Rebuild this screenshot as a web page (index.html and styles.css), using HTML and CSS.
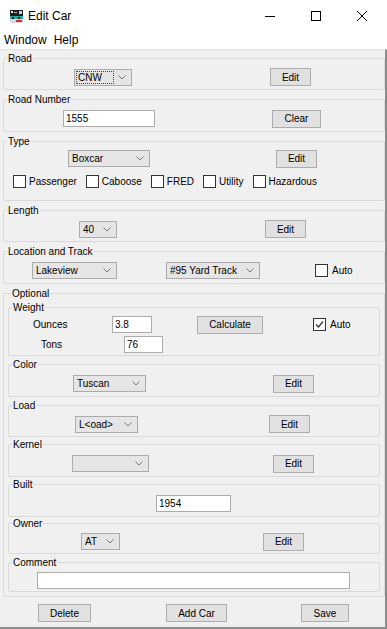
FILE: index.html
```html
<!DOCTYPE html>
<html lang="en">
<head>
    <meta charset="UTF-8">
    <title>Edit Car</title>
    <link rel="stylesheet" href="styles.css">
</head>
<body>
    <div class="window">
        <div class="titlebar">
            <svg class="app-icon" width="13" height="13" viewBox="0 0 13 13">
                <rect x="0" y="0" width="13" height="7" fill="#1e1e1e"/>
                <rect x="1" y="1" width="2" height="2" fill="#e8e8e8"/>
                <rect x="4" y="2" width="3" height="1" fill="#bbbbbb"/>
                <rect x="9" y="1" width="3" height="3" fill="#d0d0d0"/>
                <rect x="0" y="6" width="13" height="3" fill="#2aa7a0"/>
                <rect x="2" y="7" width="2" height="2" fill="#1e1e1e"/>
                <rect x="8" y="7" width="2" height="2" fill="#1e1e1e"/>
                <rect x="0" y="9" width="13" height="4" fill="#d8d8d8"/>
                <rect x="6" y="10" width="6" height="2" fill="#d42a2a"/>
            </svg>
            <span class="title">Edit Car</span>
            <div class="controls">
                <span class="ctl"><svg width="10" height="10" viewBox="0 0 10 10"><path d="M0 5.5H10" stroke="#000" stroke-width="1"/></svg></span>
                <span class="ctl"><svg width="10" height="10" viewBox="0 0 10 10"><rect x="0.5" y="0.5" width="9" height="9" fill="none" stroke="#000" stroke-width="1"/></svg></span>
                <span class="ctl"><svg width="10" height="10" viewBox="0 0 10 10"><path d="M0 0L10 10M10 0L0 10" stroke="#000" stroke-width="1"/></svg></span>
            </div>
        </div>
        <div class="menubar">
            <span>Window</span>
            <span>Help</span>
        </div>
        <div class="content">
            <fieldset class="group">
                <legend>Road</legend>
                <div class="row road-row">
                    <div class="combo combo-road is-focused"><span class="combo-text">CNW</span><span class="arrow"><svg width="8" height="5" viewBox="0 0 8 5"><path d="M0.5 0.5L4 4L7.5 0.5" fill="none" stroke="#777"/></svg></span></div>
                    <button class="btn btn-edit">Edit</button>
                </div>
            </fieldset>

            <fieldset class="group">
                <legend>Road Number</legend>
                <div class="row tall number-row">
                    <div class="field field-number">1555</div>
                    <button class="btn btn-clear">Clear</button>
                </div>
            </fieldset>

            <fieldset class="group type-group">
                <legend>Type</legend>
                <div class="row short type-row">
                    <div class="combo combo-type"><span class="combo-text">Boxcar</span><span class="arrow"><svg width="8" height="5" viewBox="0 0 8 5"><path d="M0.5 0.5L4 4L7.5 0.5" fill="none" stroke="#777"/></svg></span></div>
                    <button class="btn btn-edit">Edit</button>
                </div>
                <div class="row tall checks-row">
                    <label class="check"><span class="box"></span>Passenger</label>
                    <label class="check"><span class="box"></span>Caboose</label>
                    <label class="check"><span class="box"></span>FRED</label>
                    <label class="check"><span class="box"></span>Utility</label>
                    <label class="check"><span class="box"></span>Hazardous</label>
                </div>
            </fieldset>

            <fieldset class="group">
                <legend>Length</legend>
                <div class="row length-row">
                    <div class="combo combo-length"><span class="combo-text">40</span><span class="arrow"><svg width="8" height="5" viewBox="0 0 8 5"><path d="M0.5 0.5L4 4L7.5 0.5" fill="none" stroke="#777"/></svg></span></div>
                    <button class="btn btn-edit">Edit</button>
                </div>
            </fieldset>

            <fieldset class="group">
                <legend>Location and Track</legend>
                <div class="row tall location-row">
                    <div class="combo combo-location"><span class="combo-text">Lakeview</span><span class="arrow"><svg width="8" height="5" viewBox="0 0 8 5"><path d="M0.5 0.5L4 4L7.5 0.5" fill="none" stroke="#777"/></svg></span></div>
                    <div class="combo combo-track"><span class="combo-text">#95 Yard Track</span><span class="arrow"><svg width="8" height="5" viewBox="0 0 8 5"><path d="M0.5 0.5L4 4L7.5 0.5" fill="none" stroke="#777"/></svg></span></div>
                    <label class="check auto-check"><span class="box"></span>Auto</label>
                </div>
            </fieldset>

            <fieldset class="group optional">
                <legend>Optional</legend>

                <fieldset class="group inner weight">
                    <legend>Weight</legend>
                    <div class="row ounces-row">
                        <span class="wlabel ounces-label">Ounces</span>
                        <div class="field field-ounces">3.8</div>
                        <button class="btn btn-calc">Calculate</button>
                        <label class="check weight-auto"><span class="box checked"><svg width="11" height="11" viewBox="0 0 11 11"><path d="M2 5.5L4.5 8L9 2.5" fill="none" stroke="#333" stroke-width="1.2"/></svg></span>Auto</label>
                    </div>
                    <div class="row tons-row">
                        <span class="wlabel tons-label">Tons</span>
                        <div class="field field-tons">76</div>
                    </div>
                </fieldset>

                <fieldset class="group inner color-group">
                    <legend>Color</legend>
                    <div class="row tall color-row">
                        <div class="combo combo-color"><span class="combo-text">Tuscan</span><span class="arrow"><svg width="8" height="5" viewBox="0 0 8 5"><path d="M0.5 0.5L4 4L7.5 0.5" fill="none" stroke="#777"/></svg></span></div>
                        <button class="btn btn-edit2">Edit</button>
                    </div>
                </fieldset>

                <fieldset class="group inner load-group">
                    <legend>Load</legend>
                    <div class="row load-row">
                        <div class="combo combo-load"><span class="combo-text">L&lt;oad&gt;</span><span class="arrow"><svg width="8" height="5" viewBox="0 0 8 5"><path d="M0.5 0.5L4 4L7.5 0.5" fill="none" stroke="#777"/></svg></span></div>
                        <button class="btn btn-edit">Edit</button>
                    </div>
                </fieldset>

                <fieldset class="group inner kernel-group">
                    <legend>Kernel</legend>
                    <div class="row tall kernel-row">
                        <div class="combo combo-kernel"><span class="combo-text"></span><span class="arrow"><svg width="8" height="5" viewBox="0 0 8 5"><path d="M0.5 0.5L4 4L7.5 0.5" fill="none" stroke="#777"/></svg></span></div>
                        <button class="btn btn-edit">Edit</button>
                    </div>
                </fieldset>

                <fieldset class="group inner built-group">
                    <legend>Built</legend>
                    <div class="row tall built-row">
                        <div class="field field-built">1954</div>
                    </div>
                </fieldset>

                <fieldset class="group inner owner-group">
                    <legend>Owner</legend>
                    <div class="row owner-row">
                        <div class="combo combo-owner"><span class="combo-text">AT</span><span class="arrow"><svg width="8" height="5" viewBox="0 0 8 5"><path d="M0.5 0.5L4 4L7.5 0.5" fill="none" stroke="#777"/></svg></span></div>
                        <button class="btn btn-edit2">Edit</button>
                    </div>
                </fieldset>

                <fieldset class="group inner comment-group">
                    <legend>Comment</legend>
                    <div class="row comment-row">
                        <div class="field field-comment"></div>
                    </div>
                </fieldset>
            </fieldset>

            <div class="actions">
                <button class="btn btn-delete">Delete</button>
                <button class="btn btn-add">Add Car</button>
                <button class="btn btn-save">Save</button>
            </div>
        </div>
    </div>
</body>
</html>
```

FILE: styles.css
```css
* {
    box-sizing: border-box;
}
body {
    margin: 0;
    font-family: 'Liberation Sans', Arial, sans-serif;
    font-size: 10px;
    color: #000;
    background-color: #fff;
}
.window {
    width: 387px;
    height: 629px;
    display: flex;
    flex-direction: column;
    background-color: #fff;
}
.titlebar {
    height: 31px;
    display: flex;
    align-items: center;
    flex: none;
}
.app-icon {
    margin-left: 10px;
    margin-top: 1px;
}
.title {
    margin-left: 5px;
    font-size: 12px;
}
.controls {
    margin-left: auto;
    margin-right: 2px;
    display: flex;
}
.ctl {
    width: 46px;
    height: 31px;
    display: flex;
    align-items: center;
    justify-content: center;
}
.menubar {
    height: 18px;
    flex: none;
    display: flex;
    align-items: center;
    gap: 7px;
    padding-left: 4px;
    font-size: 12px;
}
.content {
    flex: 1;
    background-color: #f0f0f0;
    border-top: 1px solid #e3e3e3;
    border-right: 2px solid #8d8d8d;
    border-bottom: 2px solid #8d8d8d;
    padding: 2px 0 0 3px;
}

/* titled borders */
.group {
    margin: 3px 0 0;
    padding: 0;
    border: 1px solid #d9d9d9;
    border-radius: 2px;
    min-width: 0;
}
.group:first-child {
    margin-top: 0;
}
.group legend {
    margin-left: 3px;
    padding: 0 1px;
    line-height: 13px;
    font-size: 10px;
}
.optional {
    padding: 0 4px 4px 4px;
}
.inner {
    margin-top: 2px;
}
.optional > .weight {
    margin-top: 1px;
}
.load-group { margin-top: 2px; }
.kernel-group { margin-top: 1px; }
.built-group { margin-top: 1px; }
.owner-group { margin-top: 0; }

/* rows */
.row {
    display: flex;
    align-items: center;
    height: 24px;
}
.row.tall { height: 25px; }
.row.short { height: 21px; }
.checks-row {
    margin-bottom: 6px;
    padding-left: 9px;
    gap: 9px;
}
.checks-row .check { gap: 3px; }
.road-row { padding-left: 70px; gap: 138px; }
.number-row { padding-left: 59px; gap: 117px; }
.type-row { padding-left: 64px; gap: 126px; }
.length-row { padding-left: 75px; gap: 148px; }
.location-row { padding-left: 28px; gap: 49px; }
.location-row .auto-check { margin-left: 6px; }

.ounces-row { height: 21px; padding-left: 24px; }
.tons-row { height: 19px; padding-left: 32px; margin-bottom: 1px; }
.ounces-label { width: 79px; }
.tons-label { width: 83px; }
.btn-calc { margin-left: 45px; }
.weight-auto { margin-left: 50px; }

.color-row { padding-left: 64px; gap: 127px; }
.load-row { padding-left: 66px; gap: 131px; }
.kernel-row { padding-left: 63px; gap: 124px; }
.built-row { padding-left: 147px; }
.owner-row { height: 23px; padding-left: 72px; gap: 143px; }
.comment-row { height: 22px; padding-left: 28px; }

/* widgets */
.combo {
    height: 17px;
    display: flex;
    align-items: stretch;
    padding: 1px;
    border: 1px solid #acacac;
    background-color: #e5e5e5;
    flex: none;
}
.combo-text {
    flex: 1;
    display: flex;
    align-items: center;
    padding-left: 2px;
    white-space: nowrap;
    overflow: hidden;
}
.combo.is-focused .combo-text {
    outline: 1px dotted #444;
    outline-offset: -1px;
}
.arrow {
    width: 16px;
    flex: none;
    display: flex;
    align-items: center;
    justify-content: center;
}
.combo-road { width: 58px; }
.combo-type { width: 82px; }
.combo-length { width: 38px; }
.combo-location { width: 85px; }
.combo-track { width: 94px; }
.combo-color { width: 73px; }
.combo-load { width: 63px; }
.combo-kernel { width: 77px; }
.combo-owner { width: 39px; }

.btn {
    height: 18px;
    padding: 0;
    border: 1px solid #adadad;
    background-color: #e1e1e1;
    font-family: inherit;
    font-size: 10px;
    color: #000;
    flex: none;
}
.btn-edit, .btn-edit2 { width: 41px; }
.btn-clear { width: 49px; }
.btn-calc { width: 66px; }
.btn-delete { width: 53px; }
.btn-add { width: 61px; }
.btn-save { width: 48px; }

.field {
    height: 17px;
    border: 1px solid #acacac;
    background-color: #fff;
    padding-left: 2px;
    display: flex;
    align-items: center;
    flex: none;
}
.field-number { width: 92px; }
.field-ounces { width: 40px; }
.field-tons { width: 39px; }
.field-built { width: 75px; }
.field-comment { width: 313px; }

.check {
    display: flex;
    align-items: center;
    gap: 4px;
    flex: none;
}
.box {
    width: 13px;
    height: 13px;
    border: 1px solid #333;
    background-color: #fff;
    display: flex;
    align-items: center;
    justify-content: center;
}

.actions {
    height: 30px;
    display: flex;
    align-items: flex-start;
    padding: 7px 0 0 35px;
    gap: 75px;
}
.btn-save { margin-left: -1px; }
```
